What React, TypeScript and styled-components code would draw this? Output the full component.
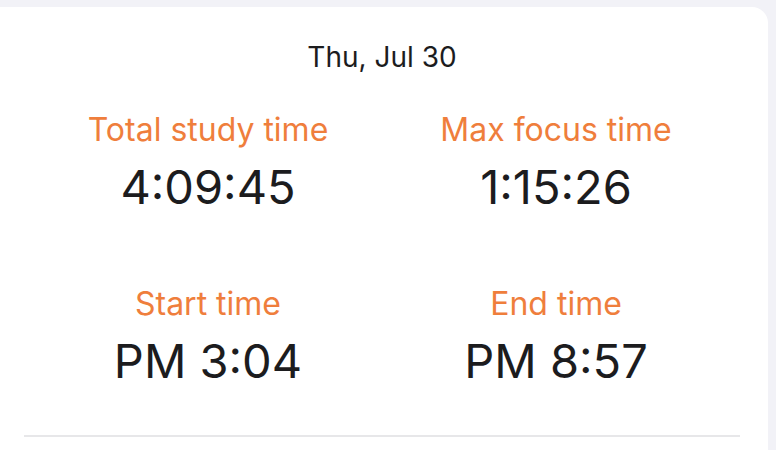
import React from "react";
import styled, { createGlobalStyle } from "styled-components";

const GlobalStyle = createGlobalStyle`
  html, body {
    margin: 0;
    padding: 0;
    background-color: #f2f2f7;
    font-family: Inter, "Noto Sans", "Liberation Sans", sans-serif;
    overflow: hidden;
  }
`;

const Page = styled.div`
  height: 450px;
  padding: 7px 8px 0 0;
  box-sizing: border-box;
`;

const Card = styled.div`
  background-color: #ffffff;
  border-radius: 0 16px 0 0;
  height: 100%;
  padding: 0 28px 0 24px;
  box-sizing: border-box;
  display: flex;
  flex-direction: column;
`;

const DateTitle = styled.div`
  text-align: center;
  color: #1c1c1e;
  font-size: 28px;
  line-height: 34px;
  margin-top: 33px;
`;

const StatsGrid = styled.div`
  display: grid;
  grid-template-columns: 348px 348px;
  justify-content: center;
  row-gap: 69px;
  margin-top: 36px;
`;

const Stat = styled.div`
  display: flex;
  flex-direction: column;
  align-items: center;
`;

const Label = styled.div`
  color: #ef7e3c;
  font-size: 32px;
  line-height: 40px;
`;

const Value = styled.div`
  color: #1c1c1e;
  font-size: 47px;
  line-height: 56px;
  margin-top: 9px;
`;

const Divider = styled.hr`
  border: none;
  border-top: 2px solid #e7e7e9;
  margin: 46px 0 0;
`;

const stats = [
  { label: "Total study time", value: "4:09:45" },
  { label: "Max focus time", value: "1:15:26" },
  { label: "Start time", value: "PM 3:04" },
  { label: "End time", value: "PM 8:57" },
];

export default function App() {
  return (
    <>
      <GlobalStyle />
      <Page>
        <Card>
          <DateTitle>Thu, Jul 30</DateTitle>
          <StatsGrid>
            {stats.map((s) => (
              <Stat key={s.label}>
                <Label>{s.label}</Label>
                <Value>{s.value}</Value>
              </Stat>
            ))}
          </StatsGrid>
          <Divider />
        </Card>
      </Page>
    </>
  );
}
